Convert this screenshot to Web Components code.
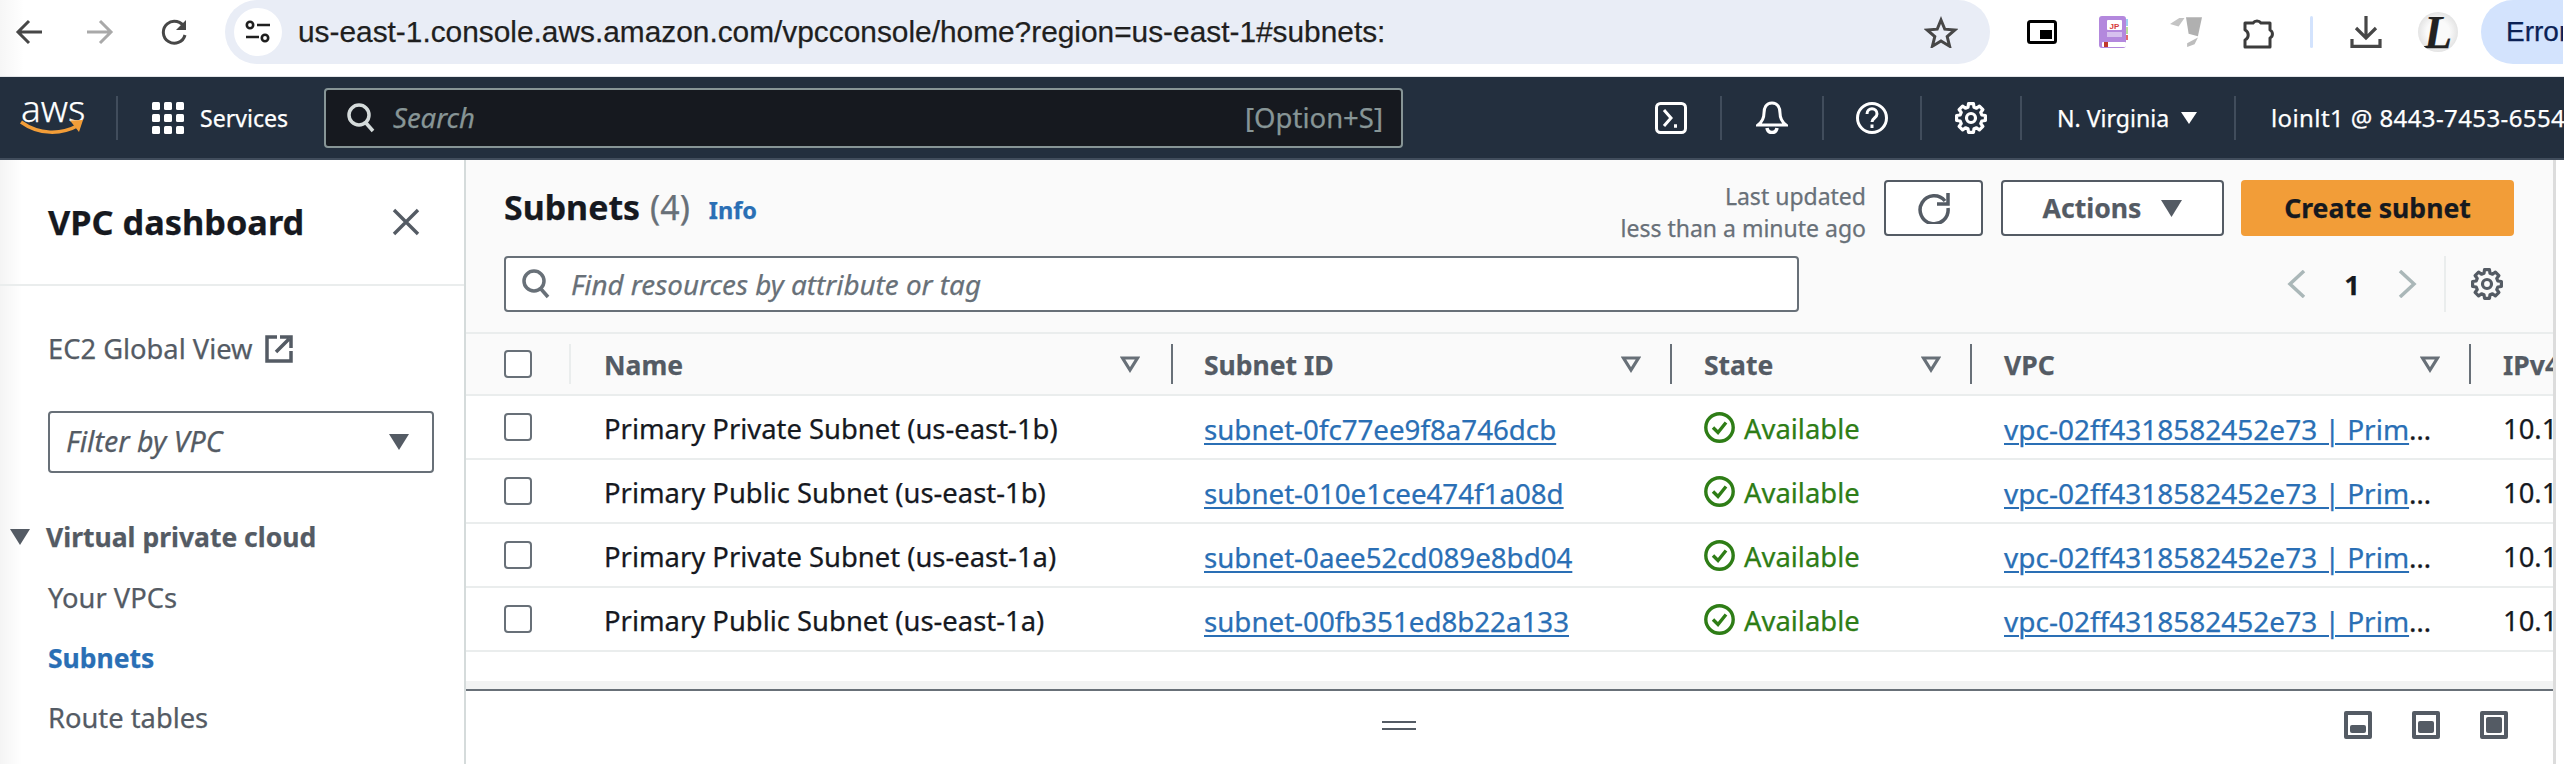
<!doctype html>
<html><head><meta charset="utf-8"><style>
html,body{margin:0;padding:0;width:2564px;height:764px;overflow:hidden;background:#fff}
body{font-family:"Noto Sans",sans-serif;display:flex;flex-direction:column;-webkit-text-stroke:.25px}
</style></head><body>
<browser-bar></browser-bar>
<aws-nav></aws-nav>
<app-shell>
  <side-nav slot="side"></side-nav>
  <page-head slot="main"></page-head>
  <subnet-table slot="main"></subnet-table>
  <split-panel slot="main"></split-panel>
</app-shell>
<script>
function def(name, html){customElements.define(name,class extends HTMLElement{constructor(){super();this.attachShadow({mode:'open'}).innerHTML=html;}});}
function gearPts(){let p=[];for(let i=0;i<8;i++){const a=i*Math.PI/4;[[-.27,11.2],[-.17,14.6],[.17,14.6],[.27,11.2]].forEach(([d,r])=>p.push((16+r*Math.sin(a+d)).toFixed(2)+','+(16-r*Math.cos(a+d)).toFixed(2)));}return p.join(' ');}
const GEAR=(s,c)=>`<svg width="${s}" height="${s}" viewBox="0 0 32 32" fill="none" stroke="${c}" stroke-width="3.200" stroke-linejoin="round"><polygon points="${gearPts()}"/><circle cx="16" cy="16" r="4.500"/></svg>`;

def('browser-bar',`<style>
:host{display:flex;height:76px;box-sizing:border-box;background:linear-gradient(90deg,#f6f6f6,#fff 24px);flex:none;overflow:hidden}
.wrap{display:flex;height:64px;width:2564px;align-items:center;flex:none}
svg{display:block;flex:none}
.pill{margin-left:38px;width:1765px;height:64px;flex:none;background:#e9edf6;border-radius:32px;display:flex;align-items:center;box-sizing:border-box;padding-left:9px}
.tune{width:48px;height:48px;border-radius:50%;background:#fff;display:flex;align-items:center;justify-content:center;flex:none}
.url{margin-left:16px;font:29.850px/64px "Liberation Sans",sans-serif;color:#1f1f1f;white-space:nowrap}
.star{margin-left:auto;margin-right:32px}
.err{margin-left:23px;height:64px;width:82px;flex:none;background:#d3e3fd;border-radius:32px 0 0 32px;font:28px/64px "Liberation Sans",sans-serif;color:#0b2155;padding-left:25px;box-sizing:border-box;overflow:hidden;white-space:nowrap}
.v{flex:none;width:3px;height:32px;border-radius:2px;background:#d3e3fd}
.av{flex:none;width:40px;height:40px;border-radius:50%;background:radial-gradient(circle,#fafafa 40%,#cfcfcf);font:italic bold 46px/42px "Liberation Serif",serif;color:#222;text-align:center;overflow:hidden}
</style><div class="wrap">
<svg style="margin-left:15px" width="27" height="26" viewBox="0 0 27 26" fill="none" stroke="#474747" stroke-width="3"><path d="M27 13H4M14 2 3 13l11 11"/></svg>
<svg style="margin-left:45px" width="27" height="26" viewBox="0 0 27 26" fill="none" stroke="#a9a9a9" stroke-width="3"><path d="M0 13h23M13 2l11 11-11 11"/></svg>
<svg style="margin-left:47px" width="26" height="26" viewBox="0 0 26 26" fill="none" stroke="#474747" stroke-width="3"><path d="M23.500 9A11 11 0 1 0 24 16"/><path d="M25 1v10H15" stroke-width="0" fill="#474747"/></svg>
<div class="pill"><div class="tune"><svg width="26" height="24" viewBox="0 0 26 24" fill="none" stroke="#1f1f1f" stroke-width="2.600"><circle cx="5" cy="5" r="3.200"/><path d="M12 5h13M1 17h13"/><circle cx="20" cy="18" r="3.200"/></svg></div>
<div class="url">us-east-1.console.aws.amazon.com/vpcconsole/home?region=us-east-1#subnets:</div>
<svg class="star" width="34" height="32" viewBox="0 0 34 32" fill="none" stroke="#474747" stroke-width="3"><path d="M17 4l3.800 9.200 10 .8-7.600 6.500 2.400 9.700L17 25l-8.600 5.200 2.400-9.700L3.200 14l10-.8z"/></svg></div>
<svg style="margin-left:37px" width="30" height="24" viewBox="0 0 30 24"><rect x="1.500" y="1.500" width="27" height="21" rx="2" fill="none" stroke="#000" stroke-width="3"/><rect x="13" y="10" width="12" height="9" fill="#000"/></svg>
<svg style="margin-left:42px" width="29" height="32" viewBox="0 0 29 32"><rect width="27" height="32" rx="3" fill="#b388dd"/><rect x="27" y="3" width="2" height="7" fill="#9ed0f0"/><rect x="27" y="11" width="2" height="7" fill="#b7df9a"/><rect x="27" y="19" width="2" height="5" fill="#e36b6b"/><rect x="8" y="4" width="15" height="10" rx="1" fill="#fff"/><text x="15.500" y="12.500" font-family="Liberation Sans" font-size="8" font-weight="700" fill="#d63c3c" text-anchor="middle" style="-webkit-text-stroke:0">JP</text><rect x="8" y="16" width="15" height="5" fill="#d6c0ee"/><rect x="3" y="26" width="24" height="5" rx="1" fill="#fff"/><rect x="5" y="26" width="4" height="5" fill="#c0392b"/></svg>
<svg style="margin-left:42px" width="32" height="30" viewBox="510 44 86 89" preserveAspectRatio="none"><path d="M510 65l25-18h14l-16 25z" fill="#c4c4c4"/><path d="M553 45h43l-11 56-25-7z" fill="#b0b0b0"/><path d="M556 122l29-17-9 20-20 8z" fill="#bdbdbd"/></svg>
<svg style="margin-left:41px" width="34" height="34" viewBox="0 0 34 34" fill="none" stroke="#3c3c3c" stroke-width="3" stroke-linejoin="round"><path d="M2 8h8a5 5 0 0 1 8 0h9v7a4.500 4.500 0 0 1 0 8v9H2v-7a5.500 5.500 0 0 0 0-10z"/></svg>
<div class="v" style="margin-left:33px"></div>
<svg style="margin-left:37px" width="32" height="32" viewBox="0 0 32 32" fill="none" stroke="#474747" stroke-width="3.200"><path d="M16 0v21M6 12l10 10 10-10M2 23v7.400h28V23"/></svg>
<div class="av" style="margin-left:36px">L</div>
<div class="err">Error</div>
</div>`);

def('aws-nav',`<style>
:host{display:flex;align-items:center;flex:none;height:84px;box-sizing:border-box;background:#232f3e;border-top:1px solid #e3e5e8;border-bottom:2px solid #414d5c;color:#fff;font-size:23.100px;white-space:nowrap;overflow:hidden}
svg{display:block;flex:none}
.logo{width:118px;height:44px;box-sizing:border-box;padding-left:20px;border-right:2px solid #414d5c;flex:none;display:flex;flex-direction:column}
.aws{font:300 37px/30px "Noto Sans",sans-serif;height:26px;margin-top:-3px;padding-left:1px}
.sv{display:flex;align-items:center;width:172px;margin-left:34px;flex:none;gap:16px}
.search{width:1079px;height:60px;box-sizing:border-box;border:2px solid #879596;border-radius:4px;background:#16191f;display:flex;align-items:center;padding:0 18px 0 21px;flex:none;color:#879596;font-size:27.500px}
.search i{margin-left:18px;font-style:italic}.search span{margin-left:auto}
.cell{height:44px;border-right:2px solid #414d5c;display:flex;align-items:center;justify-content:center;box-sizing:border-box;flex:none}
.txt{justify-content:flex-start;padding-left:35px;gap:12px}
.acct{padding-left:35px;font-size:24px;letter-spacing:.4px}
</style>
<div class="logo"><div class="aws">aws</div><svg width="64" height="18" viewBox="0 0 64 18" fill="none"><path d="M1 3c18 13 40 13 58 3" stroke="#f29d38" stroke-width="3.500"/><path d="M50 1.500l13-.5-4 12z" fill="#f29d38"/></svg></div>
<div class="sv"><svg width="32" height="32" viewBox="0 0 32 32" fill="#fff"><rect width="8" height="8" rx="1.500"/><rect x="12" width="8" height="8" rx="1.500"/><rect x="24" width="8" height="8" rx="1.500"/><rect y="12" width="8" height="8" rx="1.500"/><rect x="12" y="12" width="8" height="8" rx="1.500"/><rect x="24" y="12" width="8" height="8" rx="1.500"/><rect y="24" width="8" height="8" rx="1.500"/><rect x="12" y="24" width="8" height="8" rx="1.500"/><rect x="24" y="24" width="8" height="8" rx="1.500"/></svg><span>Services</span></div>
<div class="search"><svg width="28" height="30" viewBox="0 0 28 30" fill="none" stroke="#d5dbdb" stroke-width="3.500"><circle cx="12" cy="12" r="10"/><path d="M19 20l7 8"/></svg><i>Search</i><span>[Option+S]</span></div>
<div class="cell" style="width:100px;margin-left:219px"><svg width="32" height="32" viewBox="0 0 32 32" fill="none" stroke="#fff" stroke-width="3"><rect x="1.500" y="1.500" width="29" height="29" rx="4"/><path d="M9 8l7 8-7 8"/><path d="M19 24h3" stroke-width="3.500"/></svg></div>
<div class="cell" style="width:102px"><svg width="32" height="33" viewBox="0 0 32 33" fill="none" stroke="#fff" stroke-width="3"><path d="M16 2c-6 0-8 5-8 10 0 5-2 9-6 12h28c-4-3-6-7-6-12 0-5-2-10-8-10z"/><path d="M11 27c1 6 9 6 10 0" stroke-width="3.500"/></svg></div>
<div class="cell" style="width:98px"><svg width="32" height="32" viewBox="0 0 32 32" fill="none" stroke="#fff" stroke-width="3"><circle cx="16" cy="16" r="14.500"/><path d="M11 12c0-7 10-7 10 0 0 4-5 4-5 8"/><path d="M16 22.500v3.500"/></svg></div>
<div class="cell" style="width:100px">${GEAR(32,'#fff')}</div>
<div class="cell txt" style="width:214px"><span>N. Virginia</span><svg width="16" height="12" viewBox="0 0 16 12" fill="#fff"><path d="M0 0h16L8 12z"/></svg></div>
<div class="acct">loinlt1 @ 8443-7453-6554</div>`);

def('app-shell',`<style>
:host{display:flex;flex:1;min-height:0;background:#fff;overflow:hidden}
.side{width:464px;flex:none;background:linear-gradient(90deg,#f4f4f4,#fff 22px);}
.main{width:2087px;flex:none;border-left:2px solid #d5dbdb;border-right:3px solid #dcdcdc;display:flex;flex-direction:column;background:#fff}
</style><div class="side"><slot name="side"></slot></div><div class="main"><slot name="main"></slot></div>`);

def('side-nav',`<style>
:host{display:block;color:#545b64;font-size:27.300px;line-height:40px;white-space:nowrap}
svg{display:block;flex:none}
.hd{height:124px;border-bottom:2px solid #eaeded;display:flex;align-items:center;padding:0 44px 0 48px;justify-content:space-between}
.hd b{font-size:34.300px;color:#16191f;font-weight:700}
.ec2{margin:43px 0 0 48px;display:flex;align-items:center;gap:12px}
.flt{margin:42px 30px 0 48px;height:62px;box-sizing:border-box;border:2px solid #687078;border-radius:4px;display:flex;align-items:center;justify-content:space-between;padding:0 23px 0 16px;font-style:italic;font-size:28.600px;background:#fff}
.flt span{margin-top:-2px}
.grp{margin:44px 0 0 10px;display:flex;align-items:center;gap:16px;font-weight:700;font-size:26.500px}
ul{list-style:none;margin:11px 0 0;padding:0 0 0 48px}
li{height:60px;line-height:60px}
.on{color:#2a6fb5;font-weight:700;font-size:26.500px}
</style>
<div class="hd"><b>VPC dashboard</b><svg width="28" height="28" viewBox="0 0 28 28" stroke="#545b64" stroke-width="3.400"><path d="M2 2l24 24M26 2L2 26"/></svg></div>
<div class="ec2"><span>EC2 Global View</span><svg width="28" height="28" viewBox="0 0 28 28" fill="none" stroke="#545b64" stroke-width="3.500"><path d="M12 2H2v24h24V16"/><path d="M11 17L24 4M15 2h11v11"/></svg></div>
<div class="flt"><span>Filter by VPC</span><svg width="20" height="16" viewBox="0 0 20 16" fill="#545b64"><path d="M0 0h20L10 16z"/></svg></div>
<div class="grp"><svg width="20" height="16" viewBox="0 0 20 16" fill="#545b64"><path d="M0 0h20L10 16z"/></svg><span>Virtual private cloud</span></div>
<ul><li>Your VPCs</li><li class="on">Subnets</li><li>Route tables</li></ul>`);

def('page-head',`<style>
:host{display:block;height:172px;box-sizing:border-box;background:#fafafa;padding:20px 0 0 38px;white-space:nowrap}
svg{display:block;flex:none}
.r{display:flex;align-items:center}
.r1{height:56px;padding-right:39px}.r2{height:56px;margin-top:20px;padding-right:50px}
h1{margin:0 0 2px;font-size:33.900px;line-height:44px;font-weight:700;color:#16191f}
.n{font-weight:400;color:#687078;margin-left:10px;font-size:33.900px}
.info{color:#2a6fb5;font-weight:700;font-size:23.500px;margin:4px 0 0 19px}
.upd{margin-left:auto;text-align:right;color:#687078;font-size:23px;line-height:32.500px;margin-right:18px;margin-top:8px}
button{font:700 26.600px "Noto Sans",sans-serif;-webkit-text-stroke:.25px;height:56px;box-sizing:border-box;border-radius:4px;background:#fff;border:2px solid #545b64;color:#545b64;display:flex;align-items:center;justify-content:center;flex:none;padding:0}
.rf{width:99px;margin-right:18px}.ac{width:223px;margin-right:17px;gap:20px}
.cr{width:273px;background:#f29d38;border:0;color:#16191f}
.find{width:1295px;height:56px;box-sizing:border-box;border:2px solid #687078;border-radius:4px;background:#fff;display:flex;align-items:center;padding-left:16px;gap:21px;color:#687078;font-style:italic;font-size:27.800px}
.pg{margin-left:auto;display:flex;align-items:center}
.one{width:92px;text-align:center;color:#16191f;font-size:27.400px;font-weight:700}
.sep{width:2px;height:56px;background:#eaeded;margin:0 25px 0 27px}
</style>
<div class="r r1"><h1>Subnets<span class="n">(4)</span></h1><span class="info">Info</span>
<div class="upd">Last updated<br>less than a minute ago</div>
<button class="rf"><svg width="32" height="32" viewBox="0 0 32 32" fill="none" stroke="#545b64" stroke-width="3.500"><path d="M27 9A14 14 0 1 0 30 16"/><path d="M30 1v11H19"/></svg></button>
<button class="ac"><span>Actions</span><svg width="21" height="17" viewBox="0 0 21 17" fill="#545b64"><path d="M0 0h21L10.500 17z"/></svg></button>
<button class="cr">Create subnet</button></div>
<div class="r r2"><div class="find"><svg width="28" height="30" viewBox="0 0 28 30" fill="none" stroke="#687078" stroke-width="3.500"><circle cx="12" cy="12" r="10"/><path d="M19 20l7 8"/></svg><span>Find resources by attribute or tag</span></div>
<div class="pg"><svg width="19" height="28" viewBox="0 0 19 28" fill="none" stroke="#aab7b8" stroke-width="3.500"><path d="M17 1L3 14l14 13"/></svg><div class="one">1</div><svg width="19" height="28" viewBox="0 0 19 28" fill="none" stroke="#aab7b8" stroke-width="3.500"><path d="M2 1l14 13L2 27"/></svg><div class="sep"></div>${GEAR(32,'#545b64')}</div></div>`);

const ROWS=[['Primary Private Subnet (us-east-1b)','subnet-0fc77ee9f8a746dcb'],['Primary Public Subnet (us-east-1b)','subnet-010e1cee474f1a08d'],['Primary Private Subnet (us-east-1a)','subnet-0aee52cd089e8bd04'],['Primary Public Subnet (us-east-1a)','subnet-00fb351ed8b22a133']];
const TRI=`<svg class="t" width="20" height="17" viewBox="0 0 20 17" fill="none" stroke="#687078" stroke-width="3.200"><path d="M2.500 2h15L10 14z"/></svg>`;
const th=(t,p,r=29)=>`<div class="th" style="padding-left:${p}px;padding-right:${r}px"><span>${t}</span>${TRI}</div>`;
def('subnet-table',`<style>
:host{display:block;font-size:27.400px;color:#16191f;white-space:nowrap;height:357px;flex:none;overflow:hidden;background:#fff}
svg{display:block;flex:none}
.row{display:grid;grid-template-columns:105px 602px 499px 300px 499px 182px;height:64px;box-sizing:border-box;border-bottom:2px solid #eaeded;align-items:center}
.head{border-top:2px solid #eaeded;background:#fafafa;font-weight:700;color:#545b64;font-size:26.500px}
.box{width:28px;height:28px;box-sizing:border-box;border:2px solid #687078;border-radius:4px;background:#fff;margin-left:38px}
.c{padding:3px 0 0 32px;overflow:hidden;box-sizing:border-box}
.c.nm{padding-left:33px}.c.id{padding-left:31px}
.th{height:40px;display:flex;align-items:center;justify-content:space-between;padding:1px 29px 0 32px;border-right:2px solid #687078;box-sizing:border-box}
.th svg{margin-top:-1px}
.th.l{border-right:0}
.first{height:40px;border-right:2px solid #eaeded;display:flex;align-items:center}
a{color:#2a6fb5;text-decoration:underline;text-decoration-thickness:2px;text-underline-offset:3px}
.id a{font-size:27.700px}
.st{display:flex;align-items:center;gap:9px;color:#2e7d16}
.st svg{margin-top:-3px}
.vp{text-overflow:ellipsis;padding-right:28px;font-size:28px}
.tail{height:29px}
.bar{height:8px;background:#f2f3f3}
</style>
<div class="row head"><div class="first"><div class="box"></div></div>${th('Name',33,31)}${th('Subnet ID',31)}${th('State',32)}${th('VPC',32)}<div class="th l"><span>IPv4</span></div></div>
${ROWS.map(r=>`<div class="row"><div><div class="box"></div></div><div class="c nm">${r[0]}</div><div class="c id"><a>${r[1]}</a></div><div class="c st"><svg width="31" height="31" viewBox="0 0 31 31" fill="none" stroke="#2e7d16" stroke-width="3.400"><circle cx="15.500" cy="15.500" r="13.700"/><path d="M9 15.500l5 5 8-10"/></svg><span>Available</span></div><div class="c vp"><a>vpc-02ff4318582452e73 | Primary VPC</a></div><div class="c">10.1.0.0/20</div></div>`).join('')}
<div class="tail"></div><div class="bar"></div>`);

const PAN=(x,y,w,h)=>`<svg width="28" height="28" viewBox="0 0 28 28" fill="#545b64"><path fill-rule="evenodd" d="M2 0h24a2 2 0 0 1 2 2v24a2 2 0 0 1-2 2H2a2 2 0 0 1-2-2V2a2 2 0 0 1 2-2zM4 4v20h20V4z"/><rect x="${x}" y="${y}" width="${w}" height="${h}" rx="2"/></svg>`;
def('split-panel',`<style>
:host{display:flex;flex:1;align-items:flex-start;background:#fff;border-top:2px solid #687078;box-sizing:border-box;padding:20px 45px 0 916px}
.h{width:34px;height:9px;margin-top:10px;border-top:2px solid #545b64;border-bottom:2px solid #545b64;box-sizing:border-box}
.ic{margin-left:auto;display:flex;gap:40px}svg{display:block}
</style><div class="h"></div><div class="ic">${PAN(6,14,16,8)}${PAN(6,10,16,12)}${PAN(6,6,16,16)}</div>`);
</script></body></html>
